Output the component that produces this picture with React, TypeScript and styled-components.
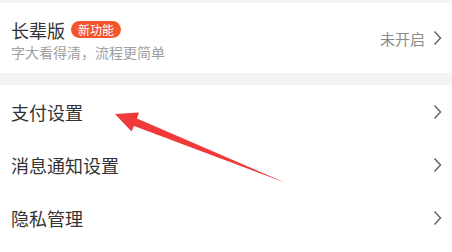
import React from "react";
import styled, { createGlobalStyle } from "styled-components";

const GlobalStyle = createGlobalStyle`
  html, body {
    margin: 0;
    padding: 0;
    background: #f4f4f4;
    font-family: "Noto Sans CJK SC", "Noto Sans", sans-serif;
  }
`;

const Page = styled.div`
  position: relative;
  width: 452px;
  height: 252px;
  overflow: hidden;
  padding-top: 3px;
  box-sizing: border-box;
  background: #f4f4f4;
`;

const Card = styled.div`
  height: 70px;
  background: #fff;
  display: flex;
  align-items: center;
  justify-content: space-between;
  padding: 0 10px 0 11px;
`;

const Left = styled.div`
  display: flex;
  flex-direction: column;
  margin-top: 3px;
`;

const TitleRow = styled.div`
  display: flex;
  align-items: center;
  gap: 6px;
`;

const Title = styled.div`
  font-size: 18px;
  line-height: 24px;
  color: #333;
`;

const Badge = styled.span`
  display: inline-flex;
  align-items: center;
  height: 17px;
  padding: 0 7px;
  border-radius: 9px;
  background: #f2552c;
  color: #fff;
  font-size: 12px;
`;

const Subtitle = styled.div`
  margin-top: 0;
  font-size: 14px;
  line-height: 20px;
  color: #a0a0a0;
`;

const Right = styled.div`
  display: flex;
  align-items: center;
  gap: 8px;
`;

const Status = styled.span`
  font-size: 15px;
  color: #8a8a8a;
`;

const List = styled.div`
  margin-top: 12px;
  background: #fff;
  padding-top: 0;
  height: 200px;
`;

const Row = styled.div`
  height: 53px;
  display: flex;
  align-items: center;
  justify-content: space-between;
  padding: 0 10px 0 11px;
`;

const RowLabel = styled.span`
  font-size: 18px;
  color: #333;
`;

const Arrow = styled.svg`
  position: absolute;
  left: 0;
  top: 0;
  pointer-events: none;
`;

const Chevron = () => (
  <svg width="9" height="16" viewBox="0 0 9 16">
    <path d="M1.5 1.5 L7.5 8 L1.5 14.5" fill="none" stroke="#666" strokeWidth="1.5" />
  </svg>
);

const rows = ["支付设置", "消息通知设置", "隐私管理"];

export default function App() {
  return (
    <Page>
      <GlobalStyle />
      <Card>
        <Left>
          <TitleRow>
            <Title>长辈版</Title>
            <Badge>新功能</Badge>
          </TitleRow>
          <Subtitle>字大看得清，流程更简单</Subtitle>
        </Left>
        <Right>
          <Status>未开启</Status>
          <Chevron />
        </Right>
      </Card>
      <List>
        {rows.map((r) => (
          <Row key={r}>
            <RowLabel>{r}</RowLabel>
            <Chevron />
          </Row>
        ))}
      </List>
      <Arrow width="452" height="252" viewBox="0 0 452 252">
        <polygon
          points="115,114 139,112.5 137,118.5 286,183 134,126 131.5,131.5"
          fill="#f03a3a"
        />
      </Arrow>
    </Page>
  );
}
